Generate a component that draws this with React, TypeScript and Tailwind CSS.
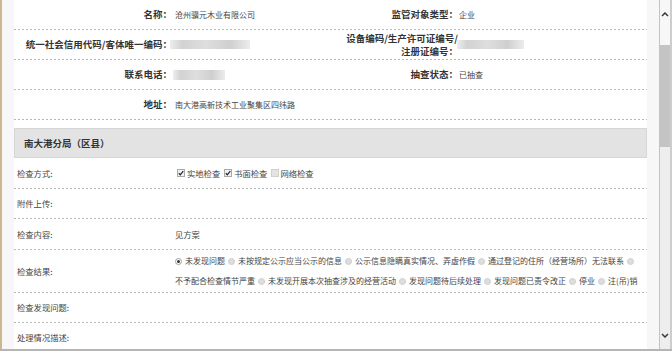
import React from "react";

function Dash() {
  return (
    <div className="h-px shrink-0 bg-[image:repeating-linear-gradient(to_right,#b8b8b8_0px,#b8b8b8_2px,transparent_2px,transparent_4px)]" />
  );
}

function Blur({ className }: { className: string }) {
  return (
    <div
      className={
        "bg-[image:linear-gradient(to_right,#eeeeee,#d2d2d2_15%,#dedede_45%,#cfcfcf_75%,#ececec)] " +
        className
      }
    />
  );
}

const LABEL = "text-right font-bold text-[9.5px] leading-[13px] text-[#333] whitespace-nowrap";
const VALUE = "text-[8px] leading-[12px] text-[#444] whitespace-nowrap";

function TopRow({
  l1,
  v1,
  l2,
  v2,
}: {
  l1: React.ReactNode;
  v1: React.ReactNode;
  l2?: React.ReactNode;
  v2?: React.ReactNode;
}) {
  return (
    <div>
      <div className="grid h-[29px] grid-cols-[158px_163px_123px_1fr] items-center">
        <div className={LABEL}>{l1}</div>
        <div className={"pl-[3px] " + VALUE}>{v1}</div>
        <div className={LABEL}>{l2}</div>
        <div className={"pl-px " + VALUE}>{v2}</div>
      </div>
      <Dash />
    </div>
  );
}

function Check({ checked }: { checked?: boolean }) {
  return (
    <span
      className={
        "relative inline-block h-[8px] w-[8px] shrink-0 border " +
        (checked ? "border-[#a9a9a9] bg-[#f2f2f2]" : "border-[#d0d0d0] bg-[#e4e4e4]")
      }
    >
      {checked && (
        <svg viewBox="0 0 8 8" className="absolute left-[-1px] top-[-1px] h-[8px] w-[8px]">
          <polyline points="1.8,4.2 3.3,5.8 6.3,2.2" fill="none" stroke="#2b2b2b" strokeWidth="1.3" />
        </svg>
      )}
    </span>
  );
}

function Radio({ checked, first }: { checked?: boolean; first?: boolean }) {
  return (
    <span
      className={
        "inline-flex h-[7px] w-[7px] shrink-0 items-center justify-center rounded-full border " +
        (first ? "mr-[3px] " : "mx-[3px] ") +
        (checked ? "border-[#a0a0a0] bg-white" : "border-[#cfcfcf] bg-[#dddddd]")
      }
    >
      {checked && <span className="h-[3px] w-[3px] rounded-full bg-[#333]" />}
    </span>
  );
}

const BL = "w-[161px] shrink-0 pl-[3px] text-[8.3px] text-[#444] whitespace-nowrap";
const BV = "text-[8.3px] text-[#444] whitespace-nowrap";

function BottomRow({ h, label, children }: { h: string; label: string; children?: React.ReactNode }) {
  return (
    <div>
      <div className={"flex items-center " + h}>
        <div className={BL}>{label}</div>
        <div className={BV}>{children}</div>
      </div>
      <Dash />
    </div>
  );
}

function Chevron({ down }: { down?: boolean }) {
  return (
    <svg viewBox="0 0 8 5" className="h-[5px] w-[8px]">
      <polyline
        points={down ? "1,1 4,4 7,1" : "1,4 4,1 7,4"}
        fill="none"
        stroke="#3a3a3a"
        strokeWidth="1.5"
      />
    </svg>
  );
}

function Scrollbar() {
  return (
    <div className="flex w-[12px] shrink-0">
      <div className="flex w-[10px] flex-col bg-[#eeeeee]">
        <div className="flex h-[45px] justify-center bg-[#f7f7f7] pt-[12px]">
          <Chevron />
        </div>
        <div className="h-[102px] bg-[#c4c4c4]" />
        <div className="flex-1" />
        <div className="flex h-[28px] items-center justify-center">
          <Chevron down />
        </div>
      </div>
      <div className="w-[2px] bg-[#cdcdcd]" />
    </div>
  );
}

export default function App() {
  return (
    <div className="flex h-[351px] w-[672px] flex-col overflow-hidden bg-white font-['Noto_Sans_CJK_SC','Noto_Sans',sans-serif]">
      <div className="flex min-h-0 flex-1">
        <div className="w-[2px] shrink-0 bg-[#cbb78f]" />
        <div className="flex min-w-0 flex-1 overflow-hidden bg-[#f7f7f7] px-[12px]">
          <div className="flex-1 bg-white">
            <TopRow l1="名称：" v1="沧州骥元木业有限公司" l2="监管对象类型：" v2="企业" />
            <TopRow
              l1="统一社会信用代码/客体唯一编码："
              v1={<Blur className="ml-[-5px] h-[9px] w-[80px]" />}
              l2={
                <>
                  设备编码/生产许可证编号/
                  <br />
                  注册证编号：
                </>
              }
              v2={<Blur className="ml-[-2px] h-[9px] w-[67px]" />}
            />
            <TopRow
              l1="联系电话："
              v1={<Blur className="ml-[-2px] h-[10px] w-[52px]" />}
              l2="抽查状态："
              v2="已抽查"
            />
            <TopRow l1="地址：" v1="南大港高新技术工业聚集区四纬路" />

            <div className="mt-[8px] flex h-[30px] items-center border border-[#d6d6d6] bg-[#e3e3e3] pl-[9px] text-[9.5px] font-bold text-[#333]">
              南大港分局（区县）
            </div>

            <BottomRow h="h-[30px]" label="检查方式:">
              <div className="flex items-center pl-[2px]">
                <Check checked />
                <span className="ml-[2px] mr-[4px]">实地检查</span>
                <Check checked />
                <span className="ml-[2px] mr-[4px]">书面检查</span>
                <Check />
                <span className="ml-[1px]">网络检查</span>
              </div>
            </BottomRow>
            <BottomRow h="h-[29px]" label="附件上传:" />
            <BottomRow h="h-[30px]" label="检查内容:">
              见方案
            </BottomRow>
            <BottomRow h="h-[42px]" label="检查结果:">
              <div className="flex flex-col text-[8px] leading-[20px]">
                <div className="flex items-center">
                  <Radio checked first />
                  <span>未发现问题</span>
                  <Radio />
                  <span>未按规定公示应当公示的信息</span>
                  <Radio />
                  <span>公示信息隐瞒真实情况、弄虚作假</span>
                  <Radio />
                  <span>通过登记的住所（经营场所）无法联系</span>
                  <Radio />
                </div>
                <div className="flex items-center">
                  <span>不予配合检查情节严重</span>
                  <Radio />
                  <span>未发现开展本次抽查涉及的经营活动</span>
                  <Radio />
                  <span>发现问题待后续处理</span>
                  <Radio />
                  <span>发现问题已责令改正</span>
                  <Radio />
                  <span>停业</span>
                  <Radio />
                  <span>注(吊)销</span>
                </div>
              </div>
            </BottomRow>
            <BottomRow h="h-[29px]" label="检查发现问题:" />
            <BottomRow h="h-[29px]" label="处理情况描述:" />
          </div>
        </div>
        <div className="w-px shrink-0 bg-[#d6c29a]" />
        <Scrollbar />
      </div>
      <div className="h-[2px] shrink-0 bg-[#b5b5b5]" />
    </div>
  );
}
